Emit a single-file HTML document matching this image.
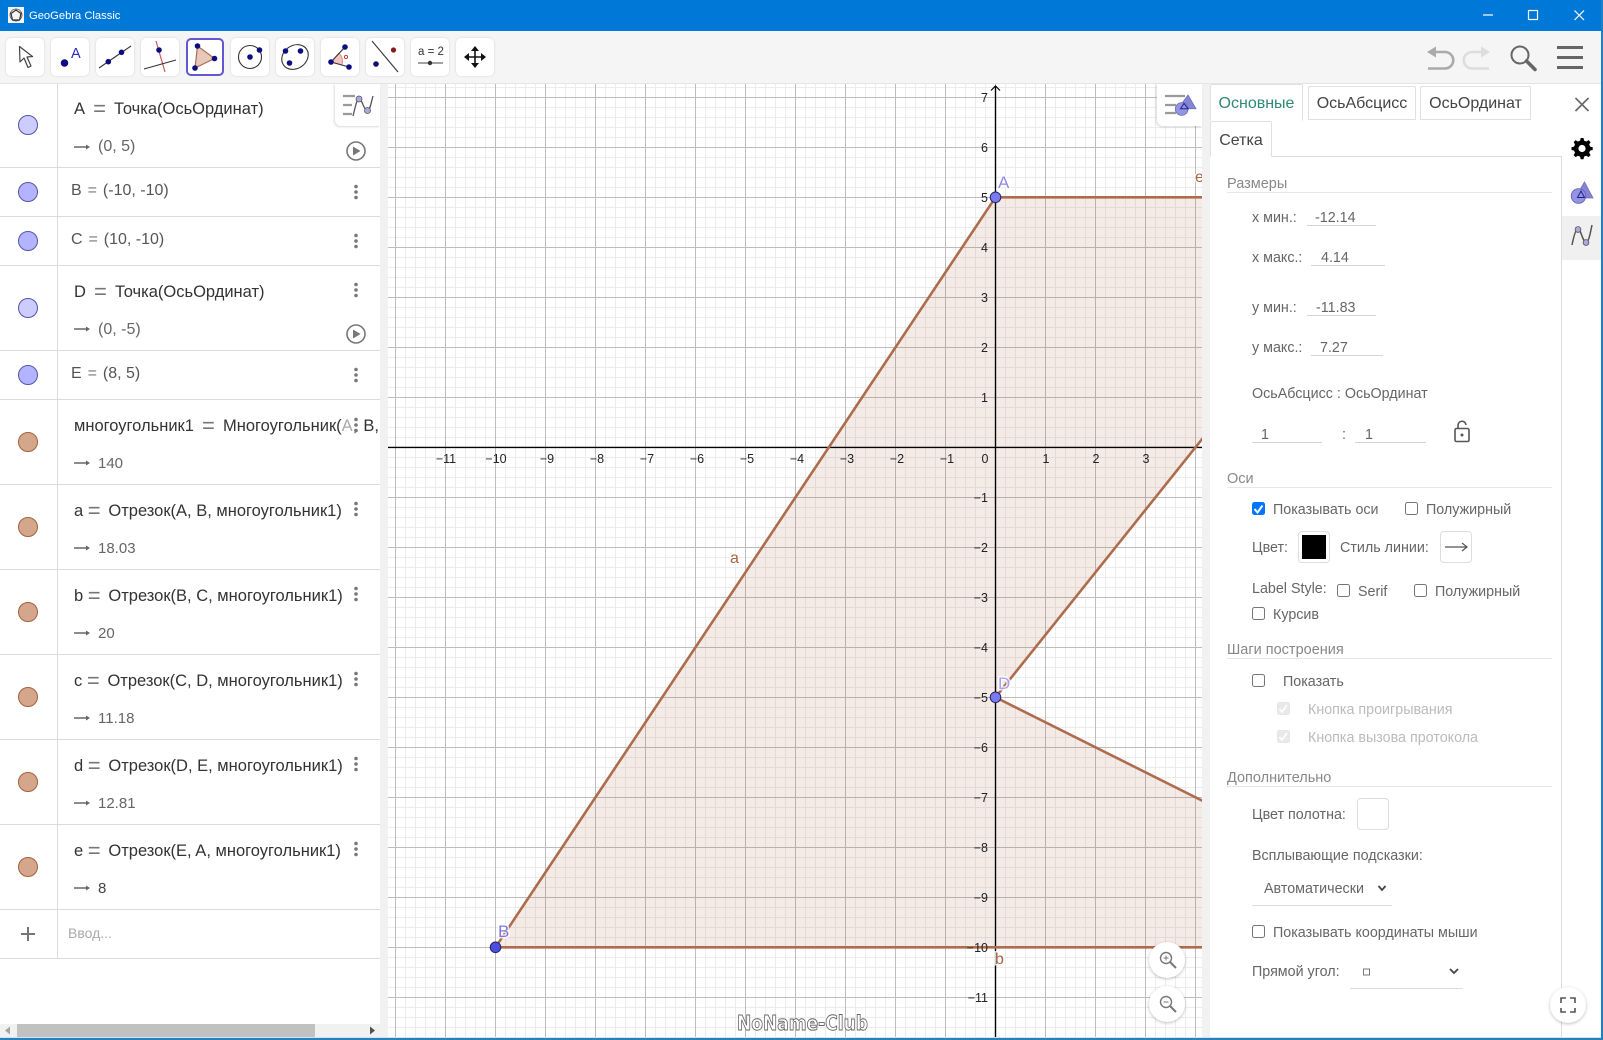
<!DOCTYPE html>
<html><head><meta charset="utf-8"><title>GeoGebra Classic</title>
<style>
html,body{margin:0;padding:0;background:#fff}
#w{position:relative;width:1603px;height:1040px;overflow:hidden;background:#fff;font-family:"Liberation Sans",sans-serif;color:#666;font-size:14.3px}
.b{position:absolute}
.t{position:absolute;line-height:20px;margin-top:-9px;white-space:nowrap}
.av{font-size:16.5px;color:#333;margin-top:-10px}
.av i{font-style:normal;color:#777;font-size:22px;line-height:0;position:relative;top:2px}
.av i.w{margin:0 3.5px}
.av i.m{margin:0 3.2px 0 0}
.s{color:#555;font-size:16px}
.s i{font-size:16px;margin:0 1.5px;top:0}
.o{font-size:15px;color:#666;margin-top:-10px}
.h{font-size:14.5px;color:#888;margin-top:-10px}
.hr{position:absolute;height:1px;background:#e6e6e6}
.in{position:absolute;height:1px;background:#d4d4d4}
.cb{position:absolute;width:11px;height:11px;border:1px solid #767676;border-radius:2.5px;background:#fff;margin-top:-7px}
.cb.d{background:#e9e9e9;border-color:#e6e6e6}
.tab{position:absolute;background:#fff;border:1px solid #e0e0e0;border-bottom:none;border-radius:2px 2px 0 0;box-sizing:border-box;text-align:center;font-size:16px;color:#444}
.tb{position:absolute;top:38px;width:38px;height:38px;background:#fff;border-radius:5px;box-shadow:0 0 2px rgba(0,0,0,.15)}
.rw{position:absolute;left:0;width:380px;height:1px;background:#dcdcdc}
svg{position:absolute;left:0;top:0}
</style></head><body><div id="w">

<svg width="1603" height="1040" viewBox="0 0 1603 1040">
<defs>
<pattern id="mi" x="395" y="97" width="10" height="10" patternUnits="userSpaceOnUse"><rect width="10" height="1" fill="#ececec"/><rect width="1" height="10" fill="#ececec"/></pattern>
<pattern id="ma" x="395" y="97" width="50" height="50" patternUnits="userSpaceOnUse"><rect width="50" height="1" fill="#bdbdbd"/><rect width="1" height="50" fill="#bdbdbd"/></pattern>
<clipPath id="c"><rect x="388" y="84" width="814" height="954"/></clipPath>
</defs>
<g clip-path="url(#c)">
<rect x="388" y="84" width="814" height="954" fill="url(#mi)"/>
<rect x="388" y="84" width="814" height="954" fill="url(#ma)"/>
<polygon points="995.5,197.3 495.5,947.3 1495.5,947.3 995.5,697.3 1395.5,197.3" fill="#b5633a" fill-opacity=".13"/>
<line x1="388" y1="447.4" x2="1202" y2="447.4" stroke="#000" stroke-width="1.4"/>
<line x1="995.5" y1="86" x2="995.5" y2="1038" stroke="#000" stroke-width="1.4"/>
<path d="M991 90.5 L995.5 86 L1000 90.5" fill="none" stroke="#000" stroke-width="1.2"/>
<g fill="none" stroke="#ad6c4c" stroke-width="2.6">
<line x1="995.5" y1="197.3" x2="495.5" y2="947.3"/>
<line x1="495.5" y1="947.3" x2="1202" y2="947.3"/>
<line x1="995.5" y1="197.3" x2="1202" y2="197.3"/>
<line x1="995.5" y1="697.3" x2="1395.5" y2="197.3"/>
<line x1="995.5" y1="697.3" x2="1495.5" y2="947.3"/>
</g>
<g font-family="Liberation Sans" font-size="12.5" fill="#222" text-anchor="middle">
<text x="446" y="463">−11</text><text x="496" y="463">−10</text><text x="547" y="463">−9</text><text x="597" y="463">−8</text><text x="647" y="463">−7</text><text x="697" y="463">−6</text><text x="747" y="463">−5</text><text x="797" y="463">−4</text><text x="847" y="463">−3</text><text x="897" y="463">−2</text><text x="947" y="463">−1</text><text x="985" y="463">0</text><text x="1046" y="463">1</text><text x="1096" y="463">2</text><text x="1146" y="463">3</text>
</g>
<g font-family="Liberation Sans" font-size="12.5" fill="#222" text-anchor="end">
<text x="988" y="102">7</text><text x="988" y="152">6</text><text x="988" y="202">5</text><text x="988" y="252">4</text><text x="988" y="302">3</text><text x="988" y="352">2</text><text x="988" y="402">1</text>
<text x="988" y="502">−1</text><text x="988" y="552">−2</text><text x="988" y="602">−3</text><text x="988" y="652">−4</text><text x="988" y="702">−5</text><text x="988" y="752">−6</text><text x="988" y="802">−7</text><text x="988" y="852">−8</text><text x="988" y="902">−9</text><text x="988" y="952">−10</text><text x="988" y="1002">−11</text>
</g>
<g font-family="Liberation Sans" font-size="17" paint-order="stroke" stroke="#fff" stroke-width="3" stroke-opacity=".8">
<text x="998" y="188" fill="#8f8be6">A</text>
<text x="498" y="937" fill="#7c78e0">B</text>
<text x="998" y="689" fill="#a6a2ee">D</text>
<text x="730" y="563" fill="#a5633e" font-size="16">a</text>
<text x="1195" y="182" fill="#a5633e" font-size="16">e</text>
<text x="995" y="964" fill="#a5633e" font-size="16">b</text>
</g>
<circle cx="995.5" cy="197.3" r="5.3" fill="#7a7aee" stroke="#22225e" stroke-width="1"/>
<circle cx="995.5" cy="697.3" r="5.3" fill="#7a7aee" stroke="#22225e" stroke-width="1"/>
<circle cx="495.5" cy="947.3" r="5.3" fill="#4d4de0" stroke="#22225e" stroke-width="1"/>
<text x="737" y="1030" font-family="DejaVu Sans" font-weight="bold" font-size="20" fill="#fff" stroke="#666" stroke-width=".9" textLength="131" lengthAdjust="spacingAndGlyphs">NoName-Club</text>
</g>
</svg>

<!-- panel backgrounds -->
<div class="b" style="left:380px;top:84px;width:8px;height:956px;background:#f1f1f1"></div>
<div class="b" style="left:1202px;top:84px;width:8px;height:956px;background:#f1f1f1"></div>
<div class="b" style="left:0;top:84px;width:380px;height:956px;background:#fff"></div>
<div class="b" style="left:1210px;top:84px;width:393px;height:956px;background:#fff"></div>
<div class="b" style="left:0;top:0;width:1603px;height:31px;background:#0078d7"></div>
<div class="b" style="left:0;top:31px;width:1603px;height:53px;background:#f5f5f5;border-bottom:1px solid #e4e4e4;box-sizing:border-box"></div>
<div class="b" style="left:0;top:1037px;width:1603px;height:1px;background:#cfe3f2"></div>
<div class="b" style="left:0;top:1038px;width:1603px;height:2px;background:#2a80b9"></div>
<div class="b" style="left:1601px;top:0;width:2px;height:1040px;background:#1f7fc4"></div>

<!-- toolbar buttons -->
<div class="tb" style="left:6px"></div><div class="tb" style="left:51px"></div><div class="tb" style="left:96px"></div><div class="tb" style="left:141px"></div>
<div class="tb" style="left:186px;box-shadow:none;border:2px solid #6557d2;box-sizing:border-box"></div>
<div class="tb" style="left:231px"></div><div class="tb" style="left:276px"></div><div class="tb" style="left:321px"></div><div class="tb" style="left:366px"></div><div class="tb" style="left:411px"></div><div class="tb" style="left:456px"></div>

<!-- algebra rows -->
<div class="b" style="left:57px;top:84px;width:1px;height:875px;background:#dcdcdc"></div>
<div class="rw" style="top:167px"></div><div class="rw" style="top:216px"></div><div class="rw" style="top:265px"></div><div class="rw" style="top:350px"></div><div class="rw" style="top:399px"></div><div class="rw" style="top:484px"></div><div class="rw" style="top:569px"></div><div class="rw" style="top:654px"></div><div class="rw" style="top:739px"></div><div class="rw" style="top:824px"></div><div class="rw" style="top:909px"></div><div class="rw" style="top:958px"></div>

<div class="t av" style="left:74px;top:109px">A&nbsp;<i class="w">=</i>&nbsp;Точка(ОсьОрдинат)</div>
<div class="t o" style="left:98px;top:147px;font-size:16px">(0, 5)</div>
<div class="t av s" style="left:71px;top:191px">B <i>=</i> (-10, -10)</div>
<div class="t av s" style="left:71px;top:240px">C <i>=</i> (10, -10)</div>
<div class="t av" style="left:74px;top:292px">D&nbsp;<i class="w">=</i>&nbsp;Точка(ОсьОрдинат)</div>
<div class="t o" style="left:98px;top:330px;font-size:16px">(0, -5)</div>
<div class="t av s" style="left:71px;top:374px">E <i>=</i> (8, 5)</div>
<div class="b" style="left:58px;top:416px;width:321px;height:22px;overflow:hidden"><div class="t av" style="left:16px;top:10px">многоугольник1&nbsp;<i class="w">=</i>&nbsp;Многоугольник(<span style="color:#aaa">A</span>, <span style="margin-left:1.5px">B</span>, C, D, E)</div></div>
<div class="t o" style="left:98px;top:464px">140</div>
<div class="t av" style="left:74px;top:511px">a&nbsp;<i class="m">=</i>&nbsp;Отрезок(A, B, многоугольник1)</div>
<div class="t o" style="left:98px;top:549px">18.03</div>
<div class="t av" style="left:74px;top:596px">b&nbsp;<i class="m">=</i>&nbsp;Отрезок(B, C, многоугольник1)</div>
<div class="t o" style="left:98px;top:634px">20</div>
<div class="t av" style="left:74px;top:681px">c&nbsp;<i class="m">=</i>&nbsp;Отрезок(C, D, многоугольник1)</div>
<div class="t o" style="left:98px;top:719px">11.18</div>
<div class="t av" style="left:74px;top:766px">d&nbsp;<i class="m">=</i>&nbsp;Отрезок(D, E, многоугольник1)</div>
<div class="t o" style="left:98px;top:804px">12.81</div>
<div class="t av" style="left:74px;top:851px">e&nbsp;<i class="m">=</i>&nbsp;Отрезок(E, A, многоугольник1)</div>
<div class="t o" style="left:98px;top:889px;color:#444">8</div>
<div class="t" style="left:68px;top:933px;color:#aaa;font-size:14px;margin-top:-10px">Ввод...</div>

<!-- scrollbar -->
<div class="b" style="left:0;top:1024px;width:380px;height:13px;background:#f1f1f1"></div>
<div class="b" style="left:17px;top:1024px;width:298px;height:13px;background:#c1c1c1"></div>

<!-- stylebar buttons -->
<div class="b" style="left:335px;top:84px;width:45px;height:42px;background:#fff;border-radius:0 0 0 6px;box-shadow:-1px 1px 2px rgba(0,0,0,.15)"></div>
<div class="b" style="left:1157px;top:84px;width:45px;height:42px;background:#fff;border-radius:0 0 0 6px;box-shadow:-1px 1px 2px rgba(0,0,0,.15)"></div>

<!-- zoom buttons -->
<div class="b" style="left:1149px;top:942px;width:36px;height:36px;border-radius:50%;background:#fff;box-shadow:0 1px 3px rgba(0,0,0,.25)"></div>
<div class="b" style="left:1149px;top:986px;width:36px;height:36px;border-radius:50%;background:#fff;box-shadow:0 1px 3px rgba(0,0,0,.25)"></div>

<!-- properties panel -->
<div class="b" style="left:1210px;top:156px;width:352px;height:881px;border-top:1px solid #ddd;border-right:1px solid #ddd;box-sizing:border-box"></div>
<div class="b" style="left:1562px;top:216px;width:39px;height:44px;background:#f0f0f0"></div>
<div class="b" style="left:1550px;top:987px;width:36px;height:36px;border-radius:50%;background:#fff;box-shadow:0 1px 3px rgba(0,0,0,.25)"></div>
<div class="tab" style="left:1210px;top:84px;width:93px;height:37px;line-height:38px;color:#2e8b74;border-bottom:1px solid #fff">Основные</div>
<div class="tab" style="left:1308px;top:86px;width:108px;height:34px;line-height:34px;border-bottom:1px solid #e0e0e0">ОсьАбсцисс</div>
<div class="tab" style="left:1420px;top:86px;width:111px;height:34px;line-height:34px;border-bottom:1px solid #e0e0e0">ОсьОрдинат</div>
<div class="tab" style="left:1210px;top:121px;width:62px;height:36px;line-height:37px;border-bottom:1px solid #fff">Сетка</div>

<div class="t h" style="left:1227px;top:184px">Размеры</div><div class="hr" style="left:1227px;top:192px;width:325px"></div>
<div class="t" style="left:1252px;top:217px">x мин.:</div><div class="t" style="left:1315px;top:217px">-12.14</div><div class="in" style="left:1307px;top:225px;width:69px"></div>
<div class="t" style="left:1252px;top:257px">x макс.:</div><div class="t" style="left:1321px;top:257px">4.14</div><div class="in" style="left:1311px;top:265px;width:74px"></div>
<div class="t" style="left:1252px;top:307px">y мин.:</div><div class="t" style="left:1316px;top:307px">-11.83</div><div class="in" style="left:1307px;top:315px;width:69px"></div>
<div class="t" style="left:1252px;top:347px">y макс.:</div><div class="t" style="left:1320px;top:347px">7.27</div><div class="in" style="left:1311px;top:355px;width:72px"></div>
<div class="t" style="left:1252px;top:393px">ОсьАбсцисс : ОсьОрдинат</div>
<div class="t" style="left:1261px;top:434px">1</div><div class="in" style="left:1252px;top:442px;width:70px"></div>
<div class="t" style="left:1342px;top:434px">:</div>
<div class="t" style="left:1365px;top:434px">1</div><div class="in" style="left:1355px;top:442px;width:71px"></div>

<div class="t h" style="left:1227px;top:479px">Оси</div><div class="hr" style="left:1227px;top:487px;width:325px"></div>
<div class="cb" style="left:1252px;top:509px;background:#0075ff;border-color:#0075ff"></div>
<div class="t" style="left:1273px;top:509px">Показывать оси</div>
<div class="cb" style="left:1405px;top:509px"></div>
<div class="t" style="left:1426px;top:509px">Полужирный</div>
<div class="t" style="left:1252px;top:547px">Цвет:</div>
<div class="b" style="left:1298px;top:531px;width:32px;height:32px;box-sizing:border-box;border:1px solid #ddd;border-radius:4px;background:#fff"></div>
<div class="b" style="left:1302px;top:535px;width:24px;height:24px;background:#000"></div>
<div class="t" style="left:1340px;top:547px">Стиль линии:</div>
<div class="b" style="left:1440px;top:531px;width:32px;height:32px;box-sizing:border-box;border:1px solid #ddd;border-radius:4px;background:#fff"></div>
<div class="t" style="left:1252px;top:588px">Label Style:</div>
<div class="cb" style="left:1337px;top:591px"></div><div class="t" style="left:1358px;top:591px">Serif</div>
<div class="cb" style="left:1414px;top:591px"></div><div class="t" style="left:1435px;top:591px">Полужирный</div>
<div class="cb" style="left:1252px;top:614px"></div><div class="t" style="left:1273px;top:614px">Курсив</div>

<div class="t h" style="left:1227px;top:650px">Шаги построения</div><div class="hr" style="left:1227px;top:658px;width:325px"></div>
<div class="cb" style="left:1252px;top:681px"></div><div class="t" style="left:1283px;top:681px">Показать</div>
<div class="cb d" style="left:1277px;top:709px"></div><div class="t" style="left:1308px;top:709px;color:#bbb">Кнопка проигрывания</div>
<div class="cb d" style="left:1277px;top:737px"></div><div class="t" style="left:1308px;top:737px;color:#bbb">Кнопка вызова протокола</div>

<div class="t h" style="left:1227px;top:778px">Дополнительно</div><div class="hr" style="left:1227px;top:786px;width:325px"></div>
<div class="t" style="left:1252px;top:814px">Цвет полотна:</div>
<div class="b" style="left:1357px;top:798px;width:32px;height:32px;box-sizing:border-box;border:1px solid #ddd;border-radius:4px;background:#fff"></div>
<div class="t" style="left:1252px;top:855px">Всплывающие подсказки:</div>
<div class="t" style="left:1264px;top:888px">Автоматически</div><div class="in" style="left:1252px;top:905px;width:140px;background:#ddd"></div>
<div class="cb" style="left:1252px;top:932px"></div><div class="t" style="left:1273px;top:932px">Показывать координаты мыши</div>
<div class="t" style="left:1252px;top:971px">Прямой угол:</div>
<div class="in" style="left:1350px;top:988px;width:113px;background:#ddd"></div>

<!-- title -->
<div class="t" style="left:29px;top:16px;color:#fff;font-size:11.2px;margin-top:-10px">GeoGebra Classic</div>
<div class="t" style="left:418px;top:52px;color:#333;font-size:11.5px;margin-top:-10px">a = 2</div>

<!-- overlay icons -->
<svg width="1603" height="1040" viewBox="0 0 1603 1040">
<!-- window -->
<rect x="8" y="7" width="16" height="16" fill="#f4f4f4"/>
<circle cx="16" cy="15" r="6" fill="none" stroke="#555" stroke-width=".8"/>
<path d="M16 10 L21 13.5 L19.5 20 L12.5 20 L11 13.5 Z" fill="none" stroke="#333" stroke-width="1.2"/>
<path d="M1483 15 H1493" stroke="#fff" stroke-width="1.2"/>
<rect x="1528.5" y="10.5" width="9" height="9" fill="none" stroke="#fff" stroke-width="1.2"/>
<path d="M1574.5 10.5 L1584 20 M1584 10.5 L1574.5 20" stroke="#fff" stroke-width="1.2"/>

<!-- tools -->
<path d="M19.5 46.5 L20 62 L24 58 L28 67.5 L31 66 L27 57 L32.5 56.5 Z" fill="#fff" stroke="#444" stroke-width="1.2" stroke-linejoin="round"/>
<circle cx="64.5" cy="63" r="3.8" fill="#0d0d80"/>
<text x="71" y="58" font-family="Liberation Sans" font-size="14.5" fill="#2a2ac0">A</text>
<line x1="99" y1="68" x2="131" y2="46" stroke="#333" stroke-width="1.1"/><circle cx="108.3" cy="61.7" r="2.8" fill="#0d0d80"/><circle cx="121.5" cy="52.3" r="2.8" fill="#0d0d80"/>
<line x1="156" y1="41" x2="165" y2="72" stroke="#d0555f" stroke-width="1.2"/><line x1="144" y1="69" x2="176" y2="60" stroke="#333" stroke-width="1.1"/><circle cx="159" cy="50" r="2.8" fill="#0d0d80"/>
<polygon points="197.5,46 214.5,58.5 195,68" fill="#e8c8b8" stroke="#a87058" stroke-width="1.2"/><circle cx="197.5" cy="46" r="2.8" fill="#0d0d80"/><circle cx="214.5" cy="58.5" r="2.8" fill="#0d0d80"/><circle cx="195" cy="68" r="2.8" fill="#0d0d80"/>
<circle cx="250" cy="57" r="11.5" fill="none" stroke="#333" stroke-width="1.1"/><circle cx="250" cy="57" r="2.8" fill="#0d0d80"/><circle cx="259.5" cy="50" r="2.8" fill="#0d0d80"/>
<ellipse cx="295" cy="57" rx="14" ry="11.5" transform="rotate(-35 295 57)" fill="none" stroke="#333" stroke-width="1.1"/><circle cx="285.5" cy="51" r="2.8" fill="#0d0d80"/><circle cx="300.5" cy="51" r="2.8" fill="#0d0d80"/><circle cx="289.5" cy="63" r="2.8" fill="#0d0d80"/>
<path d="M331 62 L339 53 A12 12 0 0 1 342 65 Z" fill="#f2c4c0" stroke="#d08080" stroke-width=".8"/><path d="M331 62 L345 47 M331 62 L349 67" stroke="#333" stroke-width="1.1"/><circle cx="331" cy="62" r="2.8" fill="#0d0d80"/><circle cx="345" cy="47" r="2.8" fill="#0d0d80"/><circle cx="349" cy="67" r="2.8" fill="#0d0d80"/><circle cx="346" cy="57" r="1.6" fill="none" stroke="#c03030" stroke-width=".9"/>
<line x1="372" y1="41" x2="398" y2="72" stroke="#333" stroke-width="1.1"/><circle cx="393.5" cy="50" r="2.6" fill="#8a1a1a"/><circle cx="376" cy="64" r="2.8" fill="#0d0d80"/>
<line x1="418" y1="63" x2="443" y2="63" stroke="#444" stroke-width="1.1"/><circle cx="430" cy="63" r="2.2" fill="#333"/>
<path d="M475 47 V67 M465 57 H485" stroke="#111" stroke-width="1.6"/><path d="M475 46 L471 51 H479 Z M475 68 L471 63 H479 Z M464 57 L469 53 V61 Z M486 57 L481 53 V61 Z" fill="#111"/>

<!-- undo/redo/search/menu -->
<path d="M1430 52 H1445 A8 8 0 0 1 1445 68.5 H1428" fill="none" stroke="#aaa" stroke-width="2.6"/><path d="M1427 52 L1436 46.5 V57.5 Z" fill="#aaa"/>
<path d="M1487 52 H1472 A8 8 0 0 0 1472 68.5 H1489" fill="none" stroke="#ddd" stroke-width="2.6"/><path d="M1490 52 L1481 46.5 V57.5 Z" fill="#ddd"/>
<circle cx="1520" cy="55" r="8.5" fill="none" stroke="#666" stroke-width="2"/><path d="M1526.5 61 L1535 69.5" stroke="#666" stroke-width="3.6" stroke-linecap="round"/>
<path d="M1557 47.5 H1583 M1557 57.5 H1583 M1557 67.5 H1583" stroke="#666" stroke-width="3"/>

<!-- marbles -->
<g stroke="#5555aa" stroke-width="1">
<circle cx="28" cy="125" r="9.5" fill="#ccccff"/><circle cx="28" cy="192" r="9.5" fill="#b3b3ff"/><circle cx="28" cy="241" r="9.5" fill="#b3b3ff"/><circle cx="28" cy="308" r="9.5" fill="#ccccff"/><circle cx="28" cy="375" r="9.5" fill="#b3b3ff"/>
</g>
<g stroke="#a5603c" stroke-width="1" fill="#d4a78c">
<circle cx="28" cy="442" r="9.5"/><circle cx="28" cy="527" r="9.5"/><circle cx="28" cy="612" r="9.5"/><circle cx="28" cy="697" r="9.5"/><circle cx="28" cy="782" r="9.5"/><circle cx="28" cy="867" r="9.5"/>
</g>
<path d="M28 927 V941 M21 934 H35" stroke="#777" stroke-width="2"/>

<!-- output arrows -->
<g stroke="#666" stroke-width="1.5" fill="#666">
<path d="M74 147 H88 M74 329 H88 M74 463 H88 M74 548 H88 M74 633 H88 M74 718 H88 M74 803 H88 M74 888 H88"/>
</g>
<g fill="#666">
<path d="M90 147 l-4 -2.5 v5z M90 329 l-4 -2.5 v5z M90 463 l-4 -2.5 v5z M90 548 l-4 -2.5 v5z M90 633 l-4 -2.5 v5z M90 718 l-4 -2.5 v5z M90 803 l-4 -2.5 v5z M90 888 l-4 -2.5 v5z"/>
</g>

<!-- play -->
<g fill="none" stroke="#777" stroke-width="1.6"><circle cx="356" cy="151" r="9"/><circle cx="356" cy="334" r="9"/></g>
<path d="M353 146.5 L360.5 151 L353 155.5 Z M353 329.5 L360.5 334 L353 338.5 Z" fill="#777"/>

<!-- more dots -->
<g fill="#777">
<circle cx="356" cy="186.5" r="1.8"/><circle cx="356" cy="192" r="1.8"/><circle cx="356" cy="197.5" r="1.8"/>
<circle cx="356" cy="235.5" r="1.8"/><circle cx="356" cy="241" r="1.8"/><circle cx="356" cy="246.5" r="1.8"/>
<circle cx="356" cy="284.5" r="1.8"/><circle cx="356" cy="290" r="1.8"/><circle cx="356" cy="295.5" r="1.8"/>
<circle cx="356" cy="369.5" r="1.8"/><circle cx="356" cy="375" r="1.8"/><circle cx="356" cy="380.5" r="1.8"/>
<circle cx="356" cy="419.5" r="1.8"/><circle cx="356" cy="425" r="1.8"/><circle cx="356" cy="430.5" r="1.8"/>
<circle cx="356" cy="503.5" r="1.8"/><circle cx="356" cy="509" r="1.8"/><circle cx="356" cy="514.5" r="1.8"/>
<circle cx="356" cy="588.5" r="1.8"/><circle cx="356" cy="594" r="1.8"/><circle cx="356" cy="599.5" r="1.8"/>
<circle cx="356" cy="673.5" r="1.8"/><circle cx="356" cy="679" r="1.8"/><circle cx="356" cy="684.5" r="1.8"/>
<circle cx="356" cy="758.5" r="1.8"/><circle cx="356" cy="764" r="1.8"/><circle cx="356" cy="769.5" r="1.8"/>
<circle cx="356" cy="843.5" r="1.8"/><circle cx="356" cy="849" r="1.8"/><circle cx="356" cy="854.5" r="1.8"/>
</g>

<!-- scroll arrows -->
<path d="M5 1030.5 L10 1026.5 V1034.5 Z" fill="#a5a5a5"/><path d="M375 1030.5 L370 1026.5 V1034.5 Z" fill="#505050"/>

<!-- AV stylebar icon -->
<path d="M343 96 H355 M343 105 H352 M343 114 H352" stroke="#999" stroke-width="2.2"/>
<path d="M353 116 C356 104 357 99 359 99 C362 99 364 110 367 111 C370 111 371 103 373 96" fill="none" stroke="#555" stroke-width="1.3"/>
<circle cx="359" cy="99" r="3" fill="#a9a9e0" stroke="#555" stroke-width=".8"/><circle cx="367.5" cy="110.5" r="3" fill="#a9a9e0" stroke="#555" stroke-width=".8"/>

<!-- EV stylebar icon -->
<path d="M1165 96 H1185 M1165 105 H1176 M1165 113 H1176" stroke="#999" stroke-width="2.2"/>
<path d="M1188 95 L1196 108.7 H1178 Z" fill="#8585d6" stroke="#7070b8" stroke-width=".8"/>
<circle cx="1181.7" cy="109" r="6.4" fill="#9494e2" stroke="#6a6ab6" stroke-width=".8"/>
<path d="M1184 103.5 L1188 108.7 H1180.5 Z" fill="none" stroke="#20208a" stroke-width="1"/>

<!-- zoom icons -->
<circle cx="1166" cy="958" r="5.5" fill="none" stroke="#777" stroke-width="1.4"/><path d="M1170 962 L1176 968" stroke="#777" stroke-width="2"/><path d="M1166 955.5 V960.5 M1163.5 958 H1168.5" stroke="#777" stroke-width="1"/>
<circle cx="1166" cy="1002" r="5.5" fill="none" stroke="#777" stroke-width="1.4"/><path d="M1170 1006 L1176 1012" stroke="#777" stroke-width="2"/><path d="M1163.5 1002 H1168.5" stroke="#777" stroke-width="1"/>
<path d="M1561 1003 V998 H1566 M1570 998 H1575 V1003 M1561 1008 V1012 H1566 M1575 1008 V1012 H1570" fill="none" stroke="#555" stroke-width="1.6"/>

<!-- right sidebar -->
<path d="M1575.5 98 L1588.5 111 M1588.5 98 L1575.5 111" stroke="#666" stroke-width="1.6"/>
<path d="M1582 139 l2 0 l.6 2.6 l2.2 .9 l2.3 -1.4 l2 2 l-1.4 2.3 l.9 2.2 l2.6 .6 v2.8 l-2.6 .6 l-.9 2.2 l1.4 2.3 l-2 2 l-2.3 -1.4 l-2.2 .9 l-.6 2.6 h-2.8 l-.6 -2.6 l-2.2 -.9 l-2.3 1.4 l-2 -2 l1.4 -2.3 l-.9 -2.2 l-2.6 -.6 v-2.8 l2.6 -.6 l.9 -2.2 l-1.4 -2.3 l2 -2 l2.3 1.4 l2.2 -.9 l.6 -2.6 Z" transform="translate(-.5,-1)" fill="#000"/>
<circle cx="1582" cy="148.5" r="3.6" fill="#fff"/>
<path d="M1584.5 182 L1593 198 H1575 Z" fill="#8585d6" stroke="#7070b8" stroke-width=".8"/>
<circle cx="1578.5" cy="196" r="7.3" fill="#9494e2" stroke="#6060b0" stroke-width=".8"/>
<path d="M1581 191 L1584.5 197.5 H1577.5 Z" fill="none" stroke="#20208a" stroke-width="1"/>
<path d="M1572 245 C1574 235 1576 229 1578 229 C1581 229 1582 241 1586 242 C1589 242 1590 234 1592 225" fill="none" stroke="#555" stroke-width="1.5"/>
<circle cx="1578" cy="229.5" r="2.9" fill="#a9a9e0" stroke="#555" stroke-width=".8"/><circle cx="1586" cy="242.5" r="2.9" fill="#a9a9e0" stroke="#555" stroke-width=".8"/>

<!-- form bits -->
<path d="M1254.5 509 L1257.5 512.5 L1262.5 505.5" fill="none" stroke="#fff" stroke-width="2"/>
<path d="M1279.5 709 L1282 712 L1287 705 M1279.5 737 L1282 740 L1287 733" fill="none" stroke="#fff" stroke-width="1.6"/>
<path d="M1445 547 H1466 M1462 543 L1467 547 L1462 551" fill="none" stroke="#555" stroke-width="1.2"/>
<rect x="1455" y="428.5" width="14" height="13" rx="1.5" fill="none" stroke="#555" stroke-width="1.6"/><path d="M1458 428 V425.5 A4 4 0 0 1 1466 425" fill="none" stroke="#555" stroke-width="1.6"/><circle cx="1462" cy="435" r="1.5" fill="#555"/>
<path d="M1378.5 886 L1382 890 L1385.5 886 M1450 969 L1454 973 L1458 969" fill="none" stroke="#444" stroke-width="1.8"/>
<rect x="1363.5" y="969" width="6" height="6" fill="none" stroke="#777" stroke-width="1"/>
</svg>

</div></body></html>
